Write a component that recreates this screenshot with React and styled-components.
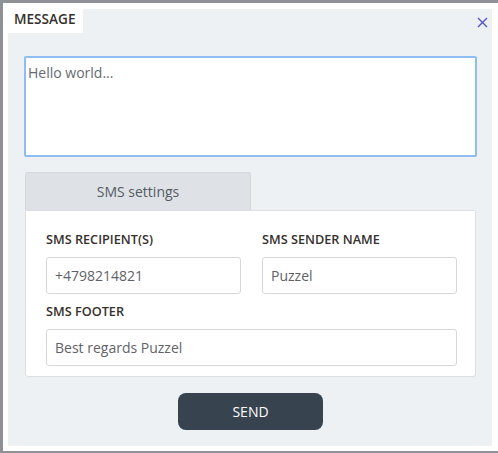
import styled, { createGlobalStyle } from 'styled-components'

const GlobalStyle = createGlobalStyle`
  html, body {
    margin: 0;
    padding: 0;
    background: #8e9196;
    overflow: hidden;
  }
  body {
    font-family: "Open Sans", "Liberation Sans", sans-serif;
  }
`

const Backdrop = styled.div`
  padding: 3px 0 0 3px;
  height: 453px;
  box-sizing: border-box;
`
const Window = styled.div`
  width: 500px;
  height: 449px;
  box-sizing: border-box;
  padding: 6px 11px 5px 5px;
  background: #ffffff;
  border-bottom: 1px solid #8e9196;
`
const Panel = styled.div`
  display: flex;
  flex-direction: column;
  height: 100%;
  background: #eef1f4;
  padding: 0 15px 17px 16px;
  box-sizing: border-box;
  & > * {
    flex-shrink: 0;
  }
`
const Header = styled.div`
  display: flex;
  justify-content: space-between;
  align-items: flex-start;
  height: 24px;
  margin: 0 -15px 0 -16px;
`
const TitleTab = styled.div`
  margin-top: -6px;
  height: 30px;
  padding: 0 7px 0 6px;
  display: flex;
  align-items: center;
  background: #ffffff;
  font-size: 13.6px;
  font-weight: 600;
  color: #35302c;
`
const CloseButton = styled.button`
  border: none;
  background: none;
  padding: 0;
  margin: 8px 4px 0 0;
  width: 11px;
  height: 11px;
  display: flex;
  cursor: pointer;
`
const MessageArea = styled.textarea`
  margin-top: 23px;
  height: 101px;
  box-sizing: border-box;
  resize: none;
  border: 2px solid #8ebdf2;
  border-radius: 2px;
  padding: 5px 2px;
  font-family: inherit;
  font-size: 14px;
  color: #444;
  outline: none;
  &::placeholder {
    color: #666a70;
  }
`
const Settings = styled.div`
  margin-top: 15px;
  display: flex;
  flex-direction: column;
  margin-right: 1px;
  margin-left: 1px;
`
const SettingsTab = styled.div`
  width: 226px;
  height: 38px;
  box-sizing: border-box;
  display: flex;
  align-items: center;
  justify-content: center;
  background: #dee2e6;
  border: 1px solid #d3d7db;
  border-bottom: none;
  border-radius: 3px 3px 0 0;
  font-size: 14px;
  color: #555b62;
`
const SettingsBody = styled.div`
  background: #ffffff;
  border: 1px solid #dcdfe2;
  border-radius: 0 0 3px 3px;
  padding: 20px 20px 10px 20px;
  display: grid;
  grid-template-columns: 195px 195px;
  column-gap: 21px;
  row-gap: 9px;
`
const Field = styled.div`
  display: flex;
  flex-direction: column;
  grid-column: ${props => (props.wide ? '1 / span 2' : 'auto')};
`
const Label = styled.label`
  font-size: 12.7px;
  font-weight: 600;
  color: #35302c;
  line-height: 16px;
  margin-bottom: 10px;
`
const Input = styled.input`
  height: 37px;
  box-sizing: border-box;
  border: 1px solid #d6d8da;
  border-radius: 3px;
  padding: 0 8px;
  font-family: inherit;
  font-size: 14px;
  color: #5f6368;
  outline: none;
`
const Footer = styled.div`
  display: flex;
  justify-content: center;
  margin-top: 16px;
`
const SendButton = styled.button`
  width: 145px;
  height: 37px;
  border: none;
  border-radius: 8px;
  background: #37434f;
  color: #ffffff;
  font-family: inherit;
  font-size: 14px;
  font-weight: 400;
  cursor: pointer;
`

function CloseIcon() {
  return (
    <svg width="11" height="11" viewBox="0 0 11 11">
      <path d="M1 1 L10 10 M10 1 L1 10" stroke="#5054c8" strokeWidth="1.4" fill="none" />
    </svg>
  )
}

export default function App() {
  return (
    <Backdrop>
      <GlobalStyle />
      <Window>
        <Panel>
          <Header>
            <TitleTab>MESSAGE</TitleTab>
            <CloseButton aria-label="Close">
              <CloseIcon />
            </CloseButton>
          </Header>
          <MessageArea placeholder="Hello world..." />
          <Settings>
            <SettingsTab>SMS settings</SettingsTab>
            <SettingsBody>
              <Field>
                <Label>SMS RECIPIENT(S)</Label>
                <Input defaultValue="+4798214821" />
              </Field>
              <Field>
                <Label>SMS SENDER NAME</Label>
                <Input defaultValue="Puzzel" />
              </Field>
              <Field wide>
                <Label>SMS FOOTER</Label>
                <Input defaultValue="Best regards Puzzel" />
              </Field>
            </SettingsBody>
          </Settings>
          <Footer>
            <SendButton>SEND</SendButton>
          </Footer>
        </Panel>
      </Window>
    </Backdrop>
  )
}
